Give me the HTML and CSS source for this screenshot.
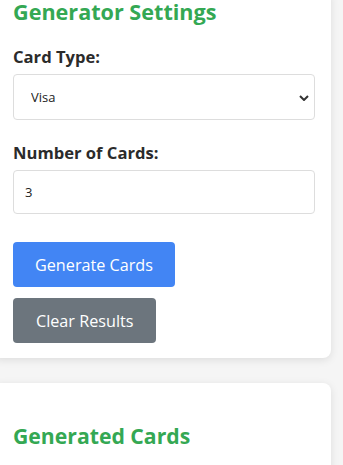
FILE: index.html
```html
<!DOCTYPE html>
<html lang="en">
<head>
<meta charset="utf-8">
<title>Card Generator</title>
<link rel="stylesheet" href="styles.css">
</head>
<body>
<main class="page">
  <section class="card settings">
    <h2 class="card-title">Generator Settings</h2>
    <div class="field">
      <label class="field-label" for="type">Card Type:</label>
      <div class="select-wrap">
        <select id="type" class="control select">
          <option>Visa</option>
          <option>Mastercard</option>
          <option>American Express</option>
        </select>
        <svg class="chev" viewBox="0 0 10 6" width="10" height="6"><path d="M1 1 L5 5 L9 1" fill="none" stroke="#333" stroke-width="2"/></svg>
      </div>
    </div>
    <div class="field">
      <label class="field-label" for="count">Number of Cards:</label>
      <input id="count" class="control input" type="text" value="3">
    </div>
    <div class="actions">
      <button class="btn btn-primary">Generate Cards</button>
      <button class="btn btn-secondary">Clear Results</button>
    </div>
  </section>
  <section class="card results">
    <h2 class="card-title results-title">Generated Cards</h2>
  </section>
</main>
</body>
</html>
```
FILE: styles.css
```css
* { box-sizing: border-box; }
html, body { margin: 0; padding: 0; }
body {
  background: #f5f5f5;
  font-family: "Open Sans", "Noto Sans", sans-serif;
  color: #333;
  overflow: hidden;
}
.page {
  width: 343px;
  padding: 0 12px 0 0;
}
.card {
  background: #fff;
  border-radius: 8px;
  box-shadow: 0 2px 8px rgba(0,0,0,0.1);
  padding: 20px 16px 15px 20px;
  margin: 0 0 25px -7px;
}
.settings {
  margin-top: -10px;
  padding-top: 10px;
}
.card-title {
  color: #34a853;
  font-size: 21.6px;
  font-weight: 700;
  margin: 0 0 22px 0;
  line-height: 24px;
}
.results { padding-top: 41px; }
.results-title { font-size: 21.2px; }
.field { margin-bottom: 22px; }
.field-label {
  display: block;
  font-weight: 700;
  font-size: 16.6px;
  line-height: 22px;
  margin-bottom: 6px;
  color: #2b2b2b;
}
.select-wrap { position: relative; }
.control {
  display: block;
  width: 100%;
  border: 1px solid #ddd;
  border-radius: 4px;
  background: #fff;
  font-family: "Open Sans", sans-serif;
  font-size: 13px;
  color: #222;
  outline: none;
}
.select {
  height: 46px;
  padding: 0 12px 0 17px;
  appearance: none;
  -webkit-appearance: none;
}
.chev { position: absolute; right: 6px; top: 21px; }
.input {
  height: 44px;
  padding: 0 11px;
}
.actions {
  display: flex;
  flex-direction: column;
  align-items: flex-start;
  gap: 11px;
  padding-top: 6px;
}
.btn {
  border: none;
  border-radius: 4px;
  color: #fff;
  font-family: "Open Sans", sans-serif;
  font-size: 16.2px;
  height: 45px;
  padding: 0 22px;
}
.btn-primary { background: #4285f4; }
.btn-secondary { background: #6c757d; padding: 0 23px; }
```
